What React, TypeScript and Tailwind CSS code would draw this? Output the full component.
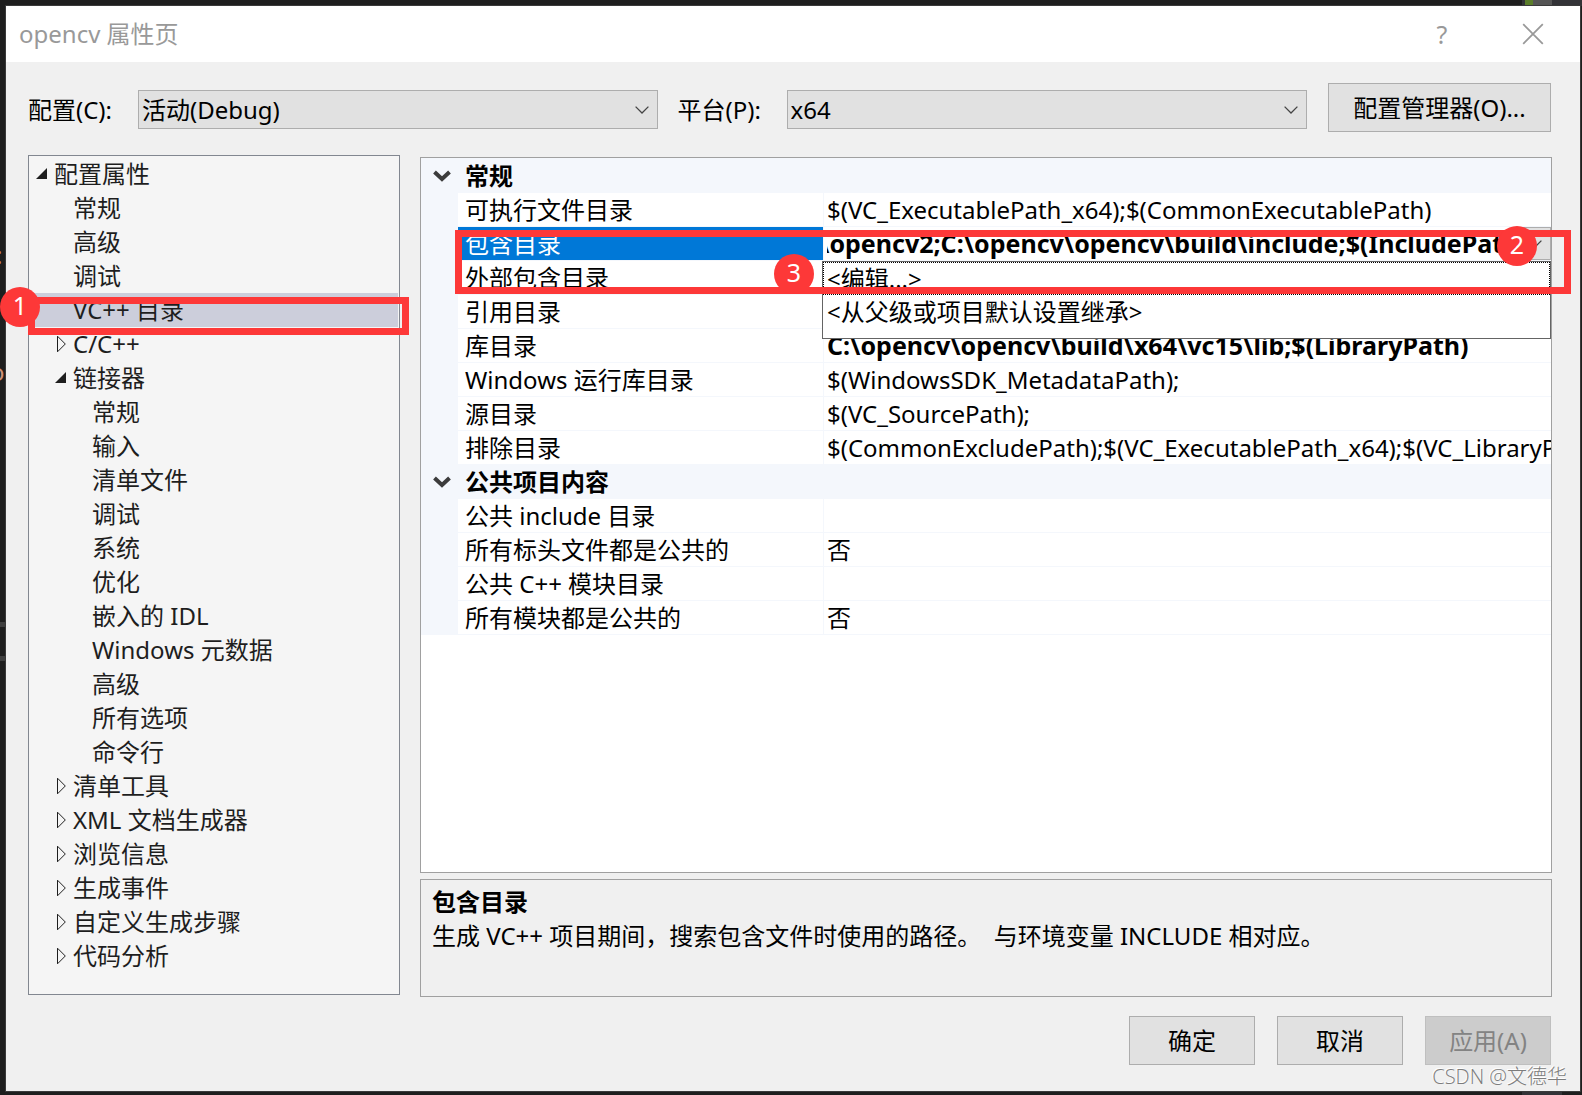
import React from 'react';
import { clsx } from 'clsx';

type TreeNode = {
  label: string;
  level: 0 | 1 | 2;
  state?: 'open' | 'closed';
  selected?: boolean;
};

const TREE: TreeNode[] = [
  { label: '配置属性', level: 0, state: 'open' },
  { label: '常规', level: 1 },
  { label: '高级', level: 1 },
  { label: '调试', level: 1 },
  { label: 'VC++ 目录', level: 1, selected: true },
  { label: 'C/C++', level: 1, state: 'closed' },
  { label: '链接器', level: 1, state: 'open' },
  { label: '常规', level: 2 },
  { label: '输入', level: 2 },
  { label: '清单文件', level: 2 },
  { label: '调试', level: 2 },
  { label: '系统', level: 2 },
  { label: '优化', level: 2 },
  { label: '嵌入的 IDL', level: 2 },
  { label: 'Windows 元数据', level: 2 },
  { label: '高级', level: 2 },
  { label: '所有选项', level: 2 },
  { label: '命令行', level: 2 },
  { label: '清单工具', level: 1, state: 'closed' },
  { label: 'XML 文档生成器', level: 1, state: 'closed' },
  { label: '浏览信息', level: 1, state: 'closed' },
  { label: '生成事件', level: 1, state: 'closed' },
  { label: '自定义生成步骤', level: 1, state: 'closed' },
  { label: '代码分析', level: 1, state: 'closed' },
];

type Row = { name: string; value: string; bold?: boolean; editing?: boolean };

const GROUPS: { title: string; rows: Row[] }[] = [
  {
    title: '常规',
    rows: [
      { name: '可执行文件目录', value: '$(VC_ExecutablePath_x64);$(CommonExecutablePath)' },
      { name: '包含目录', value: '\\opencv2;C:\\opencv\\opencv\\build\\include;$(IncludePath)', bold: true, editing: true },
      { name: '外部包含目录', value: '' },
      { name: '引用目录', value: '' },
      { name: '库目录', value: 'C:\\opencv\\opencv\\build\\x64\\vc15\\lib;$(LibraryPath)', bold: true },
      { name: 'Windows 运行库目录', value: '$(WindowsSDK_MetadataPath);' },
      { name: '源目录', value: '$(VC_SourcePath);' },
      { name: '排除目录', value: '$(CommonExcludePath);$(VC_ExecutablePath_x64);$(VC_LibraryPath_x64)' },
    ],
  },
  {
    title: '公共项目内容',
    rows: [
      { name: '公共 include 目录', value: '' },
      { name: '所有标头文件都是公共的', value: '否' },
      { name: '公共 C++ 模块目录', value: '' },
      { name: '所有模块都是公共的', value: '否' },
    ],
  },
];

const INDENT = ['pl-[7px]', 'pl-[26px]', 'pl-[45px]'];

const Chevron: React.FC<{ className?: string }> = ({ className }) => (
  <svg viewBox="0 0 14 8" className={clsx('h-2 w-3.5 fill-none stroke-[#444]', className)} strokeWidth="1.3">
    <path d="M0.6 0.6 7 7 13.4 0.6" />
  </svg>
);

const Expander: React.FC<{ state?: 'open' | 'closed' }> = ({ state }) => (
  <svg viewBox="0 0 12 18" className="h-[18px] w-3 shrink-0">
    {state === 'open' && <path d="M11 3v11H0z" fill="#1e1e1e" />}
    {state === 'closed' && <path d="M2.5 1.2v15.6L10.3 9z" fill="none" stroke="#1e1e1e" strokeWidth="1" />}
  </svg>
);

const Marker: React.FC<{ n: number; className: string }> = ({ n, className }) => (
  <span
    className={clsx(
      'absolute z-20 flex h-10 w-10 justify-center rounded-full bg-[#fd3838] text-[25px] leading-9 text-white',
      className,
    )}
  >
    {n}
  </span>
);

const Combo: React.FC<{ id: string; label: string; value: string; labelWidth: string }> = ({ id, label, value, labelWidth }) => (
  <div className="flex flex-1 items-center">
    <label htmlFor={id} className={clsx('shrink-0 whitespace-nowrap', labelWidth)}>
      {label}
    </label>
    <div className="relative flex-1">
      <select
        id={id}
        className="block h-[39px] w-full appearance-none border border-[#adadad] bg-[#e1e1e1] pl-[3px] leading-[34px] text-black"
      >
        <option>{value}</option>
      </select>
      <Chevron className="pointer-events-none absolute top-4 right-[9px]" />
    </div>
  </div>
);

const PushButton: React.FC<{ children: React.ReactNode; className?: string; disabled?: boolean }> = ({
  children,
  className,
  disabled,
}) => (
  <button
    disabled={disabled}
    className={clsx(
      'h-[49px] border',
      disabled ? 'border-[#bfbfbf] bg-[#cccccc] text-[#838383]' : 'border-[#adadad] bg-[#e1e1e1] text-black',
      className,
    )}
  >
    {children}
  </button>
);

const PropertyTree: React.FC = () => (
  <div className="relative mb-0.5 w-[372px] shrink-0 border border-[#828790] bg-[#f5f5f5] pt-px text-[#1e1e1e]">
    <ul>
      {TREE.map((node, i) => (
        <li key={i}>
          <button
            className={clsx(
              'flex h-[34px] w-[369px] items-center gap-1.5 text-left whitespace-nowrap',
              INDENT[node.level],
              node.selected && 'bg-[#cccedb]',
            )}
          >
            <Expander state={node.state} />
            {node.label}
          </button>
        </li>
      ))}
    </ul>
    <div className="pointer-events-none absolute top-[141px] -left-px z-10 h-[38px] w-[381px] border-7 border-[#fd3838]" />
    <Marker n={1} className="top-[131px] -left-[29px]" />
  </div>
);

const ValueEditor: React.FC<{ value: string }> = ({ value }) => (
  <div className="flex h-[33px]">
    <input
      aria-label="包含目录"
      defaultValue={value}
      className="ml-[3px] min-w-0 flex-1 -indent-2 text-[25px] font-bold text-black outline-none"
    />
    <button aria-label="展开" className="flex w-8 items-center justify-center border border-[#adadad] bg-[#e1e1e1]">
      <Chevron />
    </button>
    <ul className="absolute top-[34px] right-0 -left-0.5 z-10 border border-[#646464] bg-white pb-[9px]">
      <li className="h-[33px] border border-dotted border-black pl-[3px] leading-[32px]">&lt;编辑...&gt;</li>
      <li className="h-[34px] pl-1 leading-[34px]">&lt;从父级或项目默认设置继承&gt;</li>
    </ul>
  </div>
);

const PropertyGrid: React.FC = () => (
  <div className="relative flex-1 border border-[#a0a0a0] bg-white text-black">
    <table className="w-full table-fixed border-separate border-spacing-0 border-t border-[#f4f7fc]">
      <colgroup>
        <col className="w-[37px]" />
        <col className="w-[366px]" />
        <col />
      </colgroup>
      {GROUPS.map((group) => (
        <tbody key={group.title}>
          <tr className="h-[34px] bg-[#f4f7fc]">
            <td className="p-0">
              <svg viewBox="0 0 18 12" className="ml-3 h-3 w-[18px] fill-none stroke-[#3c3c3c]" strokeWidth="4">
                <path d="M1.5 2 9 9 16.5 2" />
              </svg>
            </td>
            <th colSpan={2} className="p-0 pl-[7px] text-left font-bold">
              {group.title}
            </th>
          </tr>
          {group.rows.map((row) => (
            <tr key={row.name} className="h-[34px]">
              <td className="bg-[#f4f7fc] p-0" />
              <td
                className={clsx(
                  'overflow-hidden border-r border-b border-[#f4f7fc] p-0 pl-[7px] leading-[33px] whitespace-nowrap',
                  row.editing && 'bg-[#0078d7] text-white',
                )}
              >
                {row.name}
              </td>
              <td className={clsx('border-b border-[#f4f7fc] p-0 leading-[33px]', row.editing && 'relative')}>
                {row.editing ? (
                  <ValueEditor value={row.value} />
                ) : (
                  <div className={clsx('overflow-hidden pl-[3px] whitespace-nowrap', row.bold && 'text-[25px] font-bold')}>
                    {row.value}
                  </div>
                )}
              </td>
            </tr>
          ))}
        </tbody>
      ))}
    </table>
    <div className="pointer-events-none absolute top-[72px] -right-5 left-[34px] z-20 h-16 border-7 border-[#fd3838]" />
    <Marker n={2} className="top-[68px] right-[14px]" />
    <Marker n={3} className="top-[96px] left-[353px]" />
  </div>
);

export default function App() {
  return (
    <div
      lang="zh-CN"
      className="relative flex min-h-screen overflow-hidden bg-[#1e1e1e] pt-1.5 pr-0.5 pb-1 pl-1.5 font-['Noto_Sans','Noto_Sans_CJK_SC',sans-serif] text-2xl leading-[34px]"
    >
      {/* Editor window behind the dialog */}
      <span className="absolute top-[238px] -left-1 text-[#ce9178]">:</span>
      <span className="absolute top-[355px] -left-2.5 text-[#ce9178]">o</span>
      <div className="absolute top-[622px] left-0 h-[5px] w-1.5 bg-[#3f3f3f]" />
      <div className="absolute top-[656px] left-0 h-[5px] w-1.5 bg-[#3f3f3f]" />
      <div className="absolute top-0 right-0 flex h-1.5">
        <div className="w-[3px] bg-[#333337]" />
        <div className="w-2 bg-[#5a7d2a]" />
        <div className="w-[19px] bg-[#555555]" />
        <div className="w-[30px] bg-[#333337]" />
      </div>
      <div className="absolute right-5 bottom-0 h-1 w-10 bg-[#333337]" />

      <div className="relative flex flex-1 flex-col bg-[#f0f0f0] outline outline-[#3a3a3a]">
        <header className="flex h-14 items-center bg-white pr-9 pl-[13px] text-[#999999]">
          <h1 className="flex-1">opencv 属性页</h1>
          <button aria-label="帮助" className="mr-[72px] w-4 text-[25px]">
            ?
          </button>
          <button aria-label="关闭">
            <svg viewBox="0 0 22 22" className="h-[22px] w-[22px] fill-none stroke-[#999]" strokeWidth="1.8">
              <path d="M1.2 1.2 20.8 20.8M20.8 1.2 1.2 20.8" />
            </svg>
          </button>
        </header>

        <div className="flex flex-1 flex-col pt-[21px] pr-7 pb-[26px] pl-[22px]">
          <div className="flex gap-[21px] pr-px">
            <div className="flex flex-1 items-start gap-5 pt-[7px]">
              <Combo id="configuration" label="配置(C):" value="活动(Debug)" labelWidth="w-[110px]" />
              <Combo id="platform" label="平台(P):" value="x64" labelWidth="w-[109px]" />
            </div>
            <PushButton className="w-[223px]">配置管理器(O)...</PushButton>
          </div>

          <div className="mt-[23px] flex flex-1 gap-5">
            <PropertyTree />
            <div className="flex min-w-0 flex-1 flex-col gap-1.5 pt-0.5">
              <PropertyGrid />
              <div className="h-[118px] border border-[#a0a0a0] px-[11px] pt-[5px] text-black">
                <h2 className="font-bold">包含目录</h2>
                <p>生成 VC++ 项目期间，搜索包含文件时使用的路径。 &nbsp;与环境变量 INCLUDE 相对应。</p>
              </div>
            </div>
          </div>

          <footer className="flex justify-end gap-[22px] pt-[19px] pr-px">
            <PushButton className="w-[126px]">确定</PushButton>
            <PushButton className="w-[126px]">取消</PushButton>
            <PushButton className="w-[126px]" disabled>
              应用(A)
            </PushButton>
          </footer>
        </div>

        <span className="absolute right-[13px] bottom-0 font-['Open_Sans','Noto_Sans_CJK_SC',sans-serif] text-xl leading-7 font-light text-[#7c7c7c] [text-shadow:-1px_-1px_0_#fff]">
          CSDN @文德华
        </span>
      </div>
    </div>
  );
}
